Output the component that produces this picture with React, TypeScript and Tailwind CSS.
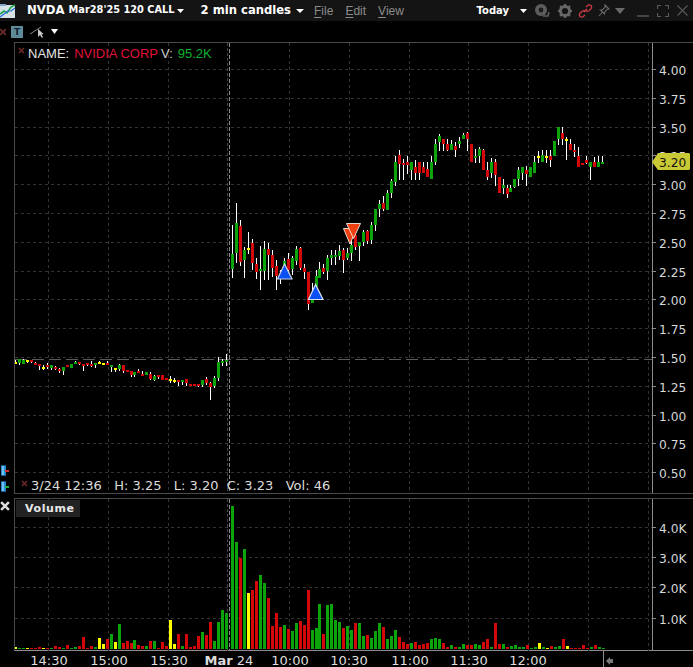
import React from "react";

const COL: Record<string, string> = { g: "#0ba50b", r: "#d40808", y: "#ffff00" };
type C = [number, string, number, number, number, number];

const PRE: C[] = ([
[46,"y",44,58,50,56],[58,"g",42,60,42,54],[70,"g",42,58,44,58],[82,"y",44,54,46,52],[94,"r",44,54,46,52],[106,"r",52,60,54,60],[118,"r",56,75,57,63],[130,"y",60,75,66,72],[142,"r",54,72,60,66],[154,"g",60,75,60,70],[166,"r",64,76,67,72],[178,"r",70,84,72,78],[190,"g",66,90,66,78],[202,"r",60,66,60,66],[214,"g",57,69,57,69],[226,"g",48,57,51,57],[238,"r",50,60,52,57],[250,"r",57,78,57,63],[262,"r",54,63,54,60],[274,"r",48,66,57,63],[286,"g",54,68,54,60],[298,"y",48,58,51,57],[310,"y",54,60,54,60],[322,"r",48,60,54,60],[334,"g",60,80,60,66],[346,"y",69,80,69,75],[358,"g",57,78,60,72],[370,"r",60,84,60,78],[382,"r",75,81,75,81],[394,"r",78,96,78,90],[403,"g",81,96,81,90],[415,"r",72,84,78,84],[427,"r",78,93,87,93],[439,"g",81,90,81,90],[451,"r",81,106,87,102],[463,"g",90,108,93,105],[475,"r",90,102,90,96],[487,"r",90,105,90,105],[499,"r",99,106,99,106],[511,"y",93,114,102,108],[523,"y",99,114,105,111],[535,"r",105,122,105,110],[547,"g",105,120,105,111],[559,"r",102,122,102,114],[571,"r",117,124,117,124],[583,"r",117,123,117,123],[595,"r",117,127,117,123],[607,"g",105,126,105,120],[619,"r",96,120,102,114],[631,"r",111,165,114,126],[643,"g",93,128,99,123],[655,"g",36,108,51,99],[667,"g",42,63,48,54],[679,"g",27,63,45,51],
] as C[]);

const MID: C[] = ([
[97,"g",105,264,192,237],[109,"g",39,220,99,190],[121,"r",90,228,108,216],[133,"g",170,264,180,210],[145,"y",126,192,174,180],[157,"r",147,240,159,219],[169,"r",204,267,222,246],[181,"g",168,300,237,243],[193,"g",153,270,177,243],[205,"r",159,270,177,195],[217,"r",180,262,195,234],[229,"r",210,300,228,258],[241,"r",240,282,250,265],[253,"g",204,240,213,250],[265,"r",189,264,207,240],[277,"g",198,255,204,237],[289,"g",168,225,177,213],[301,"r",171,240,174,234],[313,"r",222,267,234,246],[325,"r",246,360,246,342],[337,"g",280,339,330,339],[349,"g",240,290,258,290],[359,"g",216,264,237,264],[371,"r",222,252,234,246],[383,"g",195,270,204,243],[395,"g",180,225,195,204],[407,"g",180,225,195,201],[419,"g",165,210,183,198],[431,"r",174,249,180,210],[443,"g",174,210,189,204],[455,"g",150,213,165,189],[467,"r",135,180,135,171],[479,"g",156,213,156,168],[491,"g",120,168,126,156],[503,"r",120,162,123,153],[515,"g",96,162,105,150],[527,"g",57,123,57,105],[539,"g",30,81,42,57],[551,"r",18,63,39,57],
] as C[]);

const POST: C[] = ([
[22,"g",210,270,219,270],[34,"g",177,234,183,219],[46,"g",108,198,126,186],[58,"r",90,180,105,132],[70,"r",117,180,129,135],[82,"r",108,162,126,135],[94,"g",126,180,126,150],[106,"r",120,180,141,159],[118,"r",126,180,126,159],[130,"r",126,159,141,159],[142,"r",126,171,147,171],[154,"g",108,177,126,177],[166,"g",57,135,72,126],[178,"g",42,93,48,66],[190,"r",57,93,57,72],[202,"r",57,93,72,90],[214,"g",60,90,72,90],[226,"r",66,110,78,90],[238,"g",51,84,63,72],[250,"g",39,57,45,57],[262,"r",36,93,39,57],[274,"r",72,126,72,126],[286,"g",87,129,108,114],[298,"g",81,129,87,108],[310,"r",87,150,90,150],[322,"r",126,180,150,171],[334,"g",114,174,126,159],[346,"r",117,198,126,165],[358,"r",171,219,171,219],[370,"g",177,222,195,204],[382,"r",195,234,204,222],[392,"g",195,216,204,216],[403,"g",177,204,177,201],[415,"g",141,198,150,177],[427,"g",141,180,141,159],[439,"r",138,198,150,162],[451,"g",141,171,141,171],[463,"g",108,159,126,159],[475,"y",93,129,108,114],[487,"g",90,126,105,126],[499,"y",90,129,108,114],[511,"r",90,141,108,120],[523,"g",63,108,63,108],[535,"g",21,75,21,57],[547,"r",21,75,39,57],[559,"y",51,120,57,63],[571,"r",57,90,72,90],[583,"r",72,111,90,96],[595,"r",81,141,108,141],[607,"r",129,132,129,135],[619,"r",108,132,120,129],[631,"g",126,180,126,141],[643,"r",111,141,126,141],[655,"g",108,141,126,141],[667,"g",108,132,126,132],
] as C[]);

type V = [number, string, number];
const VOL_A: V[] = ([
[46,"y",231],[58,"g",234],[70,"g",234],[82,"y",234],[94,"r",236],[106,"r",234],[118,"r",231],[130,"y",234],[142,"r",234],[154,"g",234],[166,"r",228],[178,"r",231],[190,"g",234],[202,"r",225],[214,"g",234],[226,"g",231],[238,"r",228],[250,"r",201],[262,"r",234],[274,"r",228],[286,"g",231],[298,"y",204],[310,"y",222],[322,"r",207],[334,"g",192],[346,"y",216],[358,"g",162],[370,"r",219],[382,"r",213],[394,"r",219],[403,"g",210],[415,"r",225],[427,"r",228],[439,"g",228],[451,"r",213],[463,"g",213],[475,"r",234],[487,"r",216],[499,"r",228],[511,"y",150],[523,"y",222],[535,"r",192],[547,"g",228],[559,"r",192],[571,"r",231],[583,"r",228],[595,"r",198],[607,"g",186],[619,"r",195],[631,"r",156],[643,"g",213],[655,"g",156],[667,"g",120],[679,"g",129],
] as V[]);
const VOL_B: V[] = ([
[37,"g",18],[49,"g",126],[61,"r",174],[73,"g",147],[85,"y",279],[97,"r",270],[109,"r",243],[121,"g",225],[133,"g",249],[145,"r",294],[157,"r",378],[169,"r",339],[181,"r",381],[193,"g",375],[205,"r",387],[217,"g",393],[229,"g",369],[241,"r",363],[253,"r",375],[265,"r",270],[277,"g",390],[289,"g",384],[299,"g",312],[311,"r",402],[323,"g",315],[335,"g",312],[347,"g",360],[359,"g",366],[371,"r",384],[383,"g",378],
] as V[]);
const VOL_C: V[] = ([
[34,"g",150],[46,"r",129],[58,"g",129],[70,"g",168],[82,"r",165],[94,"g",174],[106,"g",153],[118,"g",129],[130,"r",141],[142,"g",177],[154,"g",168],[166,"g",150],[178,"r",171],[190,"r",186],[202,"r",192],[214,"g",189],[226,"r",186],[238,"r",195],[250,"r",192],[262,"r",189],[274,"g",177],[286,"g",174],[298,"g",177],[310,"r",189],[322,"r",201],[334,"g",195],[346,"r",201],[358,"g",201],[370,"g",192],[382,"r",195],[394,"r",195],[406,"g",192],[418,"g",195],[430,"r",186],[442,"r",177],[454,"g",201],[466,"r",129],[478,"r",192],[490,"g",192],[502,"r",201],[514,"g",198],[526,"g",195],[538,"g",201],[550,"g",201],[562,"r",195],[574,"g",204],[586,"g",201],[598,"y",189],[610,"g",201],[622,"y",204],[634,"r",198],[646,"g",201],[658,"g",198],[670,"r",177],[682,"y",198],[694,"r",204],[706,"r",204],[718,"r",204],[730,"r",195],[742,"r",204],[754,"g",201],[766,"r",195],[778,"g",201],[790,"g",204],
] as V[]);

const PX = 15, PY = 43;

function Candles({ data, ox, oy }: { data: C[]; ox: number; oy: number }) {
  return (
    <>
      {data.map(([zx, c, wt, wb, bt, bb], i) => {
        const cx = Math.floor(ox + zx / 3) - PX;
        const top = Math.round(oy + wt / 3) - PY;
        const bot = Math.round(oy + wb / 3) - PY;
        const bTop = Math.round(oy + bt / 3) - PY;
        const bBot = Math.round(oy + bb / 3) - PY;
        return (
          <g key={i}>
            <rect x={cx} y={top} width={1} height={Math.max(bot - top, 1)} fill="#fff" />
            <rect x={cx - 1} y={bTop} width={3} height={Math.max(bBot - bTop, 2)} fill={COL[c]} />
          </g>
        );
      })}
    </>
  );
}

function Bars({ data, ox, oy, base }: { data: V[]; ox: number; oy: number; base: number }) {
  return (
    <>
      {data.map(([zx, c, t], i) => {
        const cx = Math.floor(ox + zx / 3) - PX;
        const h = Math.max(Math.round((base - t) / 3), 1);
        return <rect key={i} x={cx - 1} y={oy - h} width={3} height={h} fill={COL[c]} />;
      })}
    </>
  );
}

const VX = [33, 93, 153, 274, 334, 394, 453, 513, 573, 633];
const SESSION = 214;

function Grid({ ys, h }: { ys: number[]; h: number }) {
  return (
    <>
      {ys.map((y) => (
        <line key={y} x1={0} x2={637} y1={y + 0.5} y2={y + 0.5} stroke="#333" strokeDasharray="3 3" />
      ))}
      {VX.map((x) => (
        <line key={x} x1={x + 0.5} x2={x + 0.5} y1={0} y2={h} stroke="#333" strokeDasharray="3 3" />
      ))}
      <line x1={SESSION - 1.5} x2={SESSION - 1.5} y1={0} y2={h} stroke="#444" strokeDasharray="3 2" />
      <line x1={SESSION + 0.5} x2={SESSION + 0.5} y1={0} y2={h} stroke="#8a8a8a" strokeDasharray="4 2" />
    </>
  );
}

const PRICES = ["4.00","3.75","3.50","3.25","3.00","2.75","2.50","2.25","2.00","1.75","1.50","1.25","1.00","0.75","0.50"];
const AXIS = { fontFamily: "'DejaVu Sans', sans-serif" };

function PriceChart() {
  const ys = PRICES.map((_, i) => Math.round(70 + i * 28.8) - PY - 1);
  return (
    <svg width={678} height={450} className="block shrink-0">
      <Grid ys={ys} h={450} />
      <line x1={0} x2={637} y1={316.5} y2={316.5} stroke="#5c5c5c" strokeDasharray="12 5" />
      <Candles data={PRE} ox={0} oy={345} />
      <Candles data={MID} ox={200} oy={190} />
      <Candles data={POST} ox={380} oy={120} />
      <polygon points="328.5,185.5 341.5,185.5 335,201" fill="#f0400f" stroke="#e8d8d0" strokeWidth={1} />
      <polygon points="331.5,180.5 345.5,180.5 338.5,195.5" fill="#f0400f" stroke="#e8d8d0" strokeWidth={1} />
      <polygon points="269.5,221 262.5,236 277,236" fill="#0a50f5" stroke="#c8d0e0" strokeWidth={1.2} />
      <polygon points="300.5,241.5 293.5,256.5 308,256.5" fill="#0a50f5" stroke="#d8e0ee" strokeWidth={1.2} />
      <line x1={637.5} x2={637.5} y1={0} y2={450} stroke="#8c8c8c" />
      {PRICES.map((p, i) => (
        <g key={p}>
          <line x1={637} x2={641} y1={ys[i] + 0.5} y2={ys[i] + 0.5} stroke="#8c8c8c" />
          <text x={644} y={ys[i] + 6} fontSize={12.2} fill="#d8d8d8" style={AXIS}>
            {p}
          </text>
        </g>
      ))}
      <polygon points="637,119 643,110 674,110 675,111 675,126 674,127 643,127" fill="#c9c935" />
      <text x={644} y={124} fontSize={12.2} fill="#111" style={AXIS}>
        3.20
      </text>
    </svg>
  );
}

function VolumeChart() {
  const ys = [527, 557, 587, 618].map((y) => y - 499);
  const labels = ["4.0K", "3.0K", "2.0K", "1.0K"];
  return (
    <svg width={678} height={152} className="block shrink-0">
      <Grid ys={ys} h={152} />
      <Bars data={VOL_A} ox={0} oy={150} base={237} />
      <Bars data={VOL_B} ox={220} oy={150} base={447} />
      <Bars data={VOL_C} ox={340} oy={150} base={207} />
      <line x1={637.5} x2={637.5} y1={0} y2={152} stroke="#8c8c8c" />
      {labels.map((l, i) => (
        <g key={l}>
          <line x1={637} x2={641} y1={ys[i] + 0.5} y2={ys[i] + 0.5} stroke="#8c8c8c" />
          <text x={644} y={ys[i] + 6} fontSize={12.2} fill="#d8d8d8" style={AXIS}>
            {l}
          </text>
        </g>
      ))}
    </svg>
  );
}

function Logo() {
  return (
    <svg width={16} height={15} viewBox="0 0 16 15" className="shrink-0 mt-[2px]">
      <rect x={0} y={1} width={15} height={13} fill="#d6e2e6" />
      <path d="M0 10 L4 7 L7 9 L11 3 L15 1" fill="none" stroke="#1aa64a" strokeWidth={1.6} />
      <path d="M0 13 L4 10 L8 7 L11 7 L15 4" fill="none" stroke="#2a6ae0" strokeWidth={1.2} />
      <rect x={0} y={0} width={6} height={2} fill="#7fa6c8" />
    </svg>
  );
}

function SmallX({ size = 7, className }: { size?: number; className?: string }) {
  return (
    <svg width={size} height={size} viewBox="0 0 7 7" className={className}>
      <path d="M1 1 L6 6 M6 1 L1 6" stroke="#6e2a2a" strokeWidth={1.6} />
    </svg>
  );
}

function Caret({ color = "#fff", w = 8, h = 4 }: { color?: string; w?: number; h?: number }) {
  return (
    <svg width={w} height={h} viewBox={`0 0 ${w} ${h}`} className="shrink-0">
      <polygon points={`0,0 ${w},0 ${w / 2},${h}`} fill={color} />
    </svg>
  );
}

function GutterIcon({ tip }: { tip: string }) {
  return (
    <svg width={10} height={11} viewBox="0 0 10 11" className="block">
      <rect x={1} y={0} width={5} height={11} fill="#2a8ad0" />
      <rect x={2} y={0} width={2} height={11} fill="#6fc0ee" />
      <rect x={1} y={0} width={5} height={1} fill="#1a5c90" />
      <rect x={1} y={10} width={5} height={1} fill="#1a5c90" />
      <rect x={5} y={5} width={4} height={2} fill={tip} />
    </svg>
  );
}

function HeaderIcons() {
  return (
    <div className="flex items-center ml-[7px]">
      <svg width={16} height={15} viewBox="0 0 16 15" className="shrink-0">
        <circle cx={7} cy={7} r={6} fill="#5d5d5d" />
        <circle cx={7} cy={7} r={2.4} fill="#1d1d1d" />
        <path d="M9 13 L14 13 L15 9" stroke="#5d5d5d" strokeWidth={1.6} fill="none" />
      </svg>
      <svg width={14} height={14} viewBox="0 0 14 14" className="ml-[8px] shrink-0">
        <circle cx={7} cy={7} r={4.6} fill="none" stroke="#666" strokeWidth={3} />
        <path d="M7 0 V3 M7 11 V14 M0 7 H3 M11 7 H14 M2 2 L4 4 M10 10 L12 12 M12 2 L10 4 M4 10 L2 12" stroke="#666" strokeWidth={2.2} />
      </svg>
      <svg width={15} height={14} viewBox="0 0 15 14" className="ml-[6px] shrink-0">
        <path d="M6 8 L9 5 M8 3 L10 1.2 Q11.5 0.5 13 1.5 Q14.2 3 13 4.8 L10.5 7 Q9 7.6 8 7 M7 11 L5 12.8 Q3.5 13.5 2 12.5 Q0.8 11 2 9.2 L4.5 7 Q6 6.4 7 7" fill="none" stroke="#cf3a46" strokeWidth={1.3} />
      </svg>
      <svg width={12} height={13} viewBox="0 0 12 13" className="ml-[5px] shrink-0">
        <path d="M7 1 L11 5 L9 5.5 L6.5 8.5 L6.5 10 L2.5 6 L4 6 L7 3.5 Z M4.5 8 L1 12" fill="none" stroke="#6a6a6a" strokeWidth={1.1} />
      </svg>
      <span className="ml-[5px]">
        <Caret color="#6a6a6a" w={10} h={6} />
      </span>
      <span className="ml-[12px] block w-[12px] h-[2px] bg-[#444] mt-[10px]" />
      <svg width={12} height={12} viewBox="0 0 12 12" className="ml-[8px] shrink-0">
        <path d="M0.5 4 V0.5 H4 M8 0.5 H11.5 V4 M11.5 8 V11.5 H8 M4 11.5 H0.5 V8" fill="none" stroke="#5a5a5a" strokeWidth={1.2} />
      </svg>
      <svg width={11} height={11} viewBox="0 0 11 11" className="ml-[8px] shrink-0">
        <path d="M0.5 0.5 L10.5 10.5 M10.5 0.5 L0.5 10.5" stroke="#5a5a5a" strokeWidth={1.1} />
      </svg>
    </div>
  );
}

const DEJA = "font-['DejaVu_Sans',sans-serif]";

function Menu({ first, rest }: { first: string; rest: string }) {
  return (
    <span>
      <span className="underline underline-offset-2">{first}</span>
      {rest}
    </span>
  );
}

export default function App() {
  return (
    <div className="w-[693px] h-[667px] bg-black overflow-hidden flex flex-col">
      <div className={`h-[21px] bg-[#141414] flex items-center shrink-0 text-white font-bold ${DEJA}`}>
        <Logo />
        <span className="ml-[11px] text-[11.7px]">NVDA</span>
        <span className="ml-[4px] text-[9.8px]">Mar28'25 120 CALL</span>
        <span className="ml-[2px]"><Caret w={7} h={4} /></span>
        <span className="ml-[17px] text-[11.6px] whitespace-nowrap">2 min candles</span>
        <span className="ml-[5px]"><Caret w={8} h={4} /></span>
        <span className="ml-[10px] text-[12px] font-normal text-[#8c8c8c] flex gap-[12px] font-['Liberation_Sans',sans-serif]">
          <Menu first="F" rest="ile" />
          <Menu first="E" rest="dit" />
          <Menu first="V" rest="iew" />
        </span>
        <span className="ml-auto text-[10px]">Today</span>
        <span className="ml-[11px]"><Caret w={7} h={4} /></span>
        <span className="pr-[5px]"><HeaderIcons /></span>
      </div>

      <div className="h-[21px] flex items-center shrink-0">
        <SmallX size={8} className="ml-[-1px]" />
        <span className={`ml-[4px] w-[12px] h-[12px] bg-[#5f8a98] text-[#123] text-[9px] leading-[12px] text-center font-bold ${DEJA}`}>T</span>
        <svg width={16} height={14} viewBox="0 0 16 14" className="ml-[7px]">
          <path d="M0 9 L11 2" stroke="#888" strokeWidth={1} />
          <path d="M8 4 L8 12 L10 10 L12 13 L13 12 L11.5 9.5 L13.5 9 Z" fill="#ccc" />
        </svg>
        <span className="ml-[5px]"><Caret w={7} h={5} /></span>
      </div>

      <div className="flex shrink-0">
        <div className="w-[14px] h-[451px] pt-[423px] flex flex-col gap-[5px] shrink-0">
          <GutterIcon tip="#d03030" />
          <GutterIcon tip="#20b040" />
        </div>
        <div className="border-l border-t border-b border-[#4a4a4a] relative shrink-0 h-[452px] w-[679px]">
          <PriceChart />
          <div className="absolute left-[3px] top-[3px] flex items-start font-['Liberation_Sans',sans-serif] text-[13px] leading-[15px]">
            <SmallX className="mt-[1px]" />
            <span className="text-[#e4e4e4] ml-[3px]">NAME:</span>
            <span className="text-[#e0103a] ml-[5px]">NVIDIA CORP</span>
            <span className="text-[#cfcfcf] ml-[3px]">V:</span>
            <span className="text-[#10b030] ml-[5px]">95.2K</span>
          </div>
          <div className={`absolute left-[6px] -bottom-[1px] flex items-center ${DEJA} text-[13px] leading-[16px] text-[#dcdcdc] whitespace-pre`}>
            <SmallX size={7} className="mr-[3px] mb-[5px]" />
            <span>3/24 12:36   H: 3.25   L: 3.20  C: 3.23   Vol: 46</span>
          </div>
        </div>
      </div>

      <div className="flex shrink-0 mt-[4px]">
        <div className="w-[14px] shrink-0 pt-[3px]">
          <svg width={10} height={10} viewBox="0 0 9 9">
            <path d="M1 1 L8 8 M8 1 L1 8" stroke="#ddd" strokeWidth={2.2} />
          </svg>
        </div>
        <div className="border-l border-t border-b border-t-[#4a4a4a] border-l-[#4a4a4a] border-b-[#8c8c8c] relative shrink-0 w-[679px] h-[153px]">
          <VolumeChart />
          <div className={`absolute left-[1px] top-[1px] h-[17px] w-[64px] bg-[#222] text-[#e8e8e8] ${DEJA} font-bold text-[11px] leading-[17px] tracking-[0.6px] pl-[9px]`}>
            Volume
          </div>
        </div>
      </div>

      <div className={`flex h-[16px] relative shrink-0 ${DEJA} text-[13px] leading-[16px] text-[#dcdcdc]`}>
        <div className="w-[604px] shrink-0 relative border-r border-[#8c8c8c]">
          {[["14:30",49],["15:00",109],["15:30",169],["10:00",290],["10:30",349],["11:00",410],["11:30",469],["12:00",528]].map(([t, x]) => (
            <span key={t as string} className="absolute top-[2px] -translate-x-1/2" style={{ left: x as number }}>{t}</span>
          ))}
          <span className="absolute top-[2px] -translate-x-1/2 whitespace-nowrap" style={{ left: 229 }}>
            <b>Mar</b> 24
          </span>
        </div>
        <svg width={8} height={8} viewBox="0 0 8 8" className="ml-[2px] mt-[6px]">
          <polygon points="0,4 4,0 4,8" fill="#777" />
          <rect x={4} y={2} width={3} height={4} fill="#777" />
        </svg>
      </div>
    </div>
  );
}
